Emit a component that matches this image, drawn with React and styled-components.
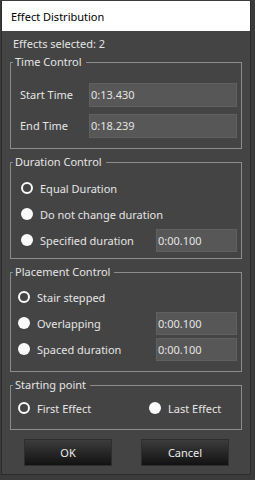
import React from "react";
import styled, { createGlobalStyle } from "styled-components";

const FONT = `"Noto Sans", "Open Sans", sans-serif`;

const Global = createGlobalStyle`
  html, body { margin: 0; padding: 0; background: #3b3b3b; }
  body { width: 255px; height: 480px; overflow: hidden; font-family: ${FONT}; }
`;

const Window = styled.div`
  margin: 1px 0 0 1px;
  width: 250px;
  height: 474px;
  background: #444444;
  border: 1px solid #2c2c2c;
  border-top: none;
  box-sizing: border-box;
  display: flex;
  flex-direction: column;
`;

const TitleBar = styled.div`
  height: 30px;
  background: #ffffff;
  color: #000;
  font-size: 11px;
  display: flex;
  align-items: center;
  padding-left: 9px;
  flex-shrink: 0;
`;

const Body = styled.div`
  display: flex;
  flex-direction: column;
  padding: 4px 8px 0 8px;
  color: #e4e4e4;
  font-size: 11px;
`;

const Info = styled.div`
  height: 18px;
  line-height: 18px;
  padding-left: 3px;
  margin-bottom: 2px;
`;

const Group = styled.fieldset`
  margin: 0 0 ${p => p.$mb || 0}px 0;
  padding: 0;
  border: 1px solid #8c8c8c;
  height: ${p => p.$h}px;
  box-sizing: border-box;
  min-width: 0;
`;

const Legend = styled.legend`
  padding: 0 4px 0 2px;
  margin-left: 2px;
  font-size: 11px;
  line-height: 14px;
  color: #e4e4e4;
`;

const Content = styled.div`
  display: flex;
  flex-direction: column;
  padding: ${p => p.$pad};
`;

const Row = styled.div`
  display: flex;
  align-items: center;
  height: ${p => p.$h || 26}px;
`;

const SplitRow = styled.div`
  display: grid;
  grid-template-columns: 131px 1fr;
  align-items: center;
  height: 24px;
`;

const Label = styled.span`
  width: ${p => p.$w}px;
  flex-shrink: 0;
`;

const Field = styled.div`
  width: ${p => p.$w}px;
  height: ${p => p.$hh || 23}px;
  margin-left: auto;
  background: #575757;
  border: 1px solid #606060;
  box-sizing: border-box;
  color: #e4e4e4;
  font-size: 11px;
  line-height: ${p => (p.$hh || 23) - 2}px;
  padding-left: 1px;
`;

const RadioWrap = styled.label`
  display: flex;
  align-items: center;
  gap: 7px;
`;

const Dot = styled.span`
  width: 12px;
  height: 12px;
  border-radius: 50%;
  box-sizing: border-box;
  background: ${p => p.$on ? "#444" : "#fafafa"};
  border: ${p => p.$on ? "2.5px solid #fafafa" : "none"};
  flex-shrink: 0;
`;

const Radio = ({ on, children }) => (
  <RadioWrap>
    <Dot $on={on} />
    <span>{children}</span>
  </RadioWrap>
);

const Buttons = styled.div`
  display: flex;
  justify-content: space-between;
  padding: 9px 13px 0 14px;
`;

const Button = styled.button`
  width: 88px;
  height: 27px;
  background: linear-gradient(#3c3c3c, #121212);
  border: 1px solid #2e2e2e;
  color: #ececec;
  font-family: ${FONT};
  font-size: 11px;
  padding: 0;
`;

export default function App() {
  return (
    <>
      <Global />
      <Window>
        <TitleBar>Effect Distribution</TitleBar>
        <Body>
          <Info>Effects selected: 2</Info>
          <Group $h={94} $mb={6}>
            <Legend>Time Control</Legend>
            <Content $pad="10px 4px 0 9px">
              <Row $h={31}>
                <Label $w={69}>Start Time</Label>
                <Field $w={148} $hh={24}>0:13.430</Field>
              </Row>
              <Row $h={31}>
                <Label $w={69}>End Time</Label>
                <Field $w={148} $hh={24}>0:18.239</Field>
              </Row>
            </Content>
          </Group>
          <Group $h={104} $mb={6}>
            <Legend>Duration Control</Legend>
            <Content $pad="6px 4px 0 10px">
              <Row><Radio on>Equal Duration</Radio></Row>
              <Row><Radio>Do not change duration</Radio></Row>
              <Row>
                <Radio>Specified duration</Radio>
                <Field $w={81}>0:00.100</Field>
              </Row>
            </Content>
          </Group>
          <Group $h={107} $mb={6}>
            <Legend>Placement Control</Legend>
            <Content $pad="5px 4px 0 7px">
              <Row><Radio on>Stair stepped</Radio></Row>
              <Row>
                <Radio>Overlapping</Radio>
                <Field $w={81}>0:00.100</Field>
              </Row>
              <Row>
                <Radio>Spaced duration</Radio>
                <Field $w={81}>0:00.100</Field>
              </Row>
            </Content>
          </Group>
          <Group $h={52}>
            <Legend>Starting point</Legend>
            <Content $pad="4px 4px 0 7px">
              <SplitRow>
                <Radio on>First Effect</Radio>
                <Radio>Last Effect</Radio>
              </SplitRow>
            </Content>
          </Group>
          <Buttons>
            <Button>OK</Button>
            <Button>Cancel</Button>
          </Buttons>
        </Body>
      </Window>
    </>
  );
}
